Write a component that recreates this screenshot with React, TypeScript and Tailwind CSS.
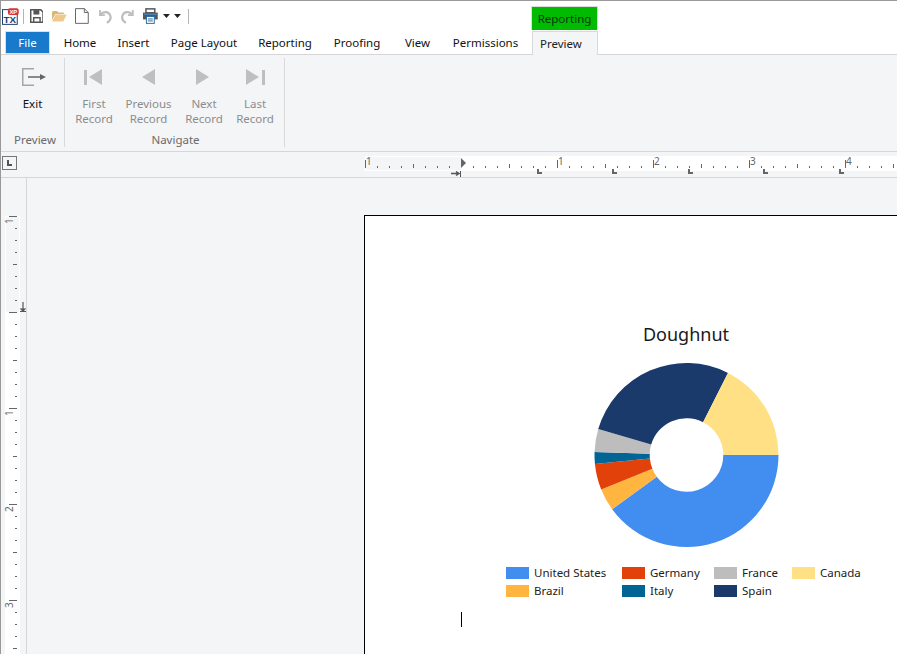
import React from "react";

const font = { fontFamily: '"Noto Sans", "Open Sans", sans-serif' };

const slices: { c: string; to: number }[] = [
  { c: "#418df0", to: 143.9 },
  { c: "#ffb540", to: 158 },
  { c: "#e2410a", to: 174.4 },
  { c: "#006595", to: 181.9 },
  { c: "#bdbdbd", to: 196.4 },
  { c: "#1a3a6c", to: 296.8 },
  { c: "#ffe084", to: 360 },
];

function arc(a0: number, a1: number) {
  const R = 92, r = 36.8, cx = 93.5, cy = 93;
  const p = (rad: number, a: number) => {
    const t = (a * Math.PI) / 180;
    return `${(cx + rad * Math.cos(t)).toFixed(2)} ${(cy + rad * Math.sin(t)).toFixed(2)}`;
  };
  const large = a1 - a0 > 180 ? 1 : 0;
  return `M${p(R, a0)}A${R} ${R} 0 ${large} 1 ${p(R, a1)}L${p(r, a1)}A${r} ${r} 0 ${large} 0 ${p(r, a0)}Z`;
}

function Donut() {
  let prev = 0;
  return (
    <svg width="186" height="186" viewBox="0 0 186 186" className="block">
      {slices.map((s) => {
        const d = arc(prev, s.to);
        prev = s.to;
        return <path key={s.c} d={d} fill={s.c} />;
      })}
    </svg>
  );
}

function TxLogo() {
  return (
    <svg width="17" height="17" viewBox="0 0 17 17" className="block">
      <rect x="0.5" y="1.5" width="15" height="15" fill="#fff" stroke="#1c3f6e" />
      <rect x="6" y="0" width="11" height="7" rx="2" fill="#d8323c" />
      <text x="7.5" y="6" fontSize="6" fontWeight="700" fill="#fff" fontFamily="Liberation Sans">XP</text>
      <text x="1.5" y="15" fontSize="10" fontWeight="700" fill="#1c3f6e" fontFamily="Liberation Sans">TX</text>
    </svg>
  );
}

const Sep = () => <div className="w-px h-[15px] bg-[#b5b5b5]" />;

function QuickIcons() {
  return (
    <div className="flex items-center w-[188px] h-full pl-[1px]">
      <TxLogo />
      <div className="ml-[4px]"><Sep /></div>
      <svg width="14" height="14" viewBox="0 0 14 14" className="ml-[6px]">
        <path d="M.75.75H11L13.25 3V13.25H.75Z" fill="none" stroke="#555" strokeWidth="1.5" />
        <rect x="3.5" y="1" width="6" height="4.5" fill="#555" />
        <rect x="3" y="8" width="8" height="5" fill="#555" />
        <rect x="4.5" y="9.5" width="5" height="3" fill="#fff" />
      </svg>
      <svg width="15" height="12" viewBox="0 0 15 12" className="ml-[9px]">
        <path d="M0 2.5Q0 1 1.5 1H5L6.5 2.5H12V4H3.5L0 10Z" fill="#d9b877" />
        <path d="M3.8 4.5H15L11.5 11.5H0Z" fill="#efc98b" />
      </svg>
      <svg width="14" height="16" viewBox="0 0 14 16" className="ml-[8px]">
        <path d="M.5.5H9.5L13.5 4.5V15.5H.5Z" fill="#fff" stroke="#666" />
        <path d="M9.5.5V4.5H13.5" fill="none" stroke="#666" />
      </svg>
      <svg width="14" height="15" viewBox="0 0 14 15" className="ml-[9px]">
        <path d="M2 1V6H7" fill="none" stroke="#bdbdbd" strokeWidth="1.8" />
        <path d="M2.5 5.500C5 2 11 2 12.500 6.500C13.500 9.500 11.500 12.500 9 14" fill="none" stroke="#bdbdbd" strokeWidth="2.200" />
      </svg>
      <svg width="14" height="15" viewBox="0 0 14 15" className="ml-[9px]">
        <path d="M12 1V6H7" fill="none" stroke="#bdbdbd" strokeWidth="1.8" />
        <path d="M11.500 5.500C9 2 3 2 1.500 6.500C.5 9.500 2.500 12.500 5 14" fill="none" stroke="#bdbdbd" strokeWidth="2.200" />
      </svg>
      <svg width="17" height="16" viewBox="0 0 17 16" className="ml-[7px]">
        <rect x="4" y="0.750" width="9" height="4" fill="#fff" stroke="#555" strokeWidth="1.500" />
        <path d="M1 4.500H16V11.500H1Z" fill="#555" />
        <rect x="2" y="5.500" width="13" height="1.500" fill="#4f7fa8" />
        <rect x="4.500" y="8.500" width="8" height="7" fill="#fff" stroke="#2f6b9e" />
        <path d="M6 11H11M6 13H11" stroke="#2f6b9e" />
      </svg>
      <svg width="7" height="4" viewBox="0 0 7 4" className="ml-[5px]"><path d="M0 0H7L3.500 4Z" fill="#222" /></svg>
      <svg width="7" height="4" viewBox="0 0 7 4" className="ml-[4px]"><path d="M0 0H7L3.500 4Z" fill="#222" /></svg>
      <div className="ml-[7px]"><Sep /></div>
    </div>
  );
}

const tabs = [
  { t: "Home", w: "w-[60px]" },
  { t: "Insert", w: "w-[47px]" },
  { t: "Page Layout", w: "w-[94px]" },
  { t: "Reporting", w: "w-[68px]" },
  { t: "Proofing", w: "w-[76px]" },
  { t: "View", w: "w-[45px]" },
  { t: "Permissions", w: "w-[91px]" },
];

const NavIcon = ({ d }: { d: string }) => (
  <svg width="20" height="16" viewBox="0 0 20 16" className="block">
    <path d={d} fill="#bfbfbf" />
  </svg>
);

function NavBtn({ w, a, b, d }: { w: string; a: string; b: string; d: string }) {
  return (
    <div className={`${w} flex flex-col items-center text-[#8c8c8c] leading-[15px]`}>
      <div className="h-[17px] mb-[11px] flex items-center"><NavIcon d={d} /></div>
      <span>{a}</span>
      <span>{b}</span>
    </div>
  );
}

function HRuler() {
  const small: number[] = [];
  for (let x = 377; x < 897; x += 12) {
    if ((x - 365) % 96 !== 0 && (x - 461) % 96 !== 0) small.push(x);
  }
  const mids = [413, 509, 605, 701, 797, 893];
  const longs = [365, 557, 653, 749, 845];
  const labels: [number, string][] = [[367, "1"], [559, "1"], [655, "2"], [751, "3"], [847, "4"]];
  const stops = [537, 612, 688, 763, 839];
  return (
    <svg width="880" height="25" viewBox="17 152 880 25" className="block">
      <rect x="365" y="156" width="532" height="15" fill="#fff" />
      <rect x="366" y="157" width="95" height="13" fill="#f4f5f7" />
      {small.map((x) => <rect key={x} x={x} y="166" width="1" height="2" fill="#666" />)}
      {mids.map((x) => <rect key={x} x={x} y="164" width="1" height="4" fill="#666" />)}
      {longs.map((x) => <rect key={x} x={x} y="160" width="1" height="8" fill="#666" />)}
      {labels.map(([x, s]) => (
        <text key={x} x={x - 1} y="165" fontSize="10" fill="#666" fontFamily="Noto Sans">{s}</text>
      ))}
      <path d="M461 158L466 163L461 168Z" fill="#666" />
      {stops.map((x) => <path key={x} d={`M${x} 169H${x + 2}V172H${x + 5}V174H${x}Z`} fill="#666" />)}
      <path d="M451 173.500H458M456 171.500L459 173.500L456 175.500" stroke="#555" strokeWidth="1.500" fill="none" />
      <rect x="460" y="171" width="1" height="6" fill="#555" />
    </svg>
  );
}

function VRuler() {
  const small: number[] = [];
  for (let y = 228; y < 654; y += 12) {
    if ((y - 216) % 48 !== 0) small.push(y);
  }
  const mids = [264, 360, 456, 552, 648];
  const longs = [216, 312, 408, 504, 600];
  const labels: [number, string][] = [[219, "1"], [411, "1"], [507, "2"], [603, "3"]];
  return (
    <svg width="25" height="476" viewBox="1 178 25 476" className="block">
      <rect x="5" y="216" width="15" height="438" fill="#fff" />
      <rect x="6" y="217" width="13" height="95" fill="#f4f5f7" />
      {small.map((y) => <rect key={y} x="15" y={y} width="2" height="1" fill="#666" />)}
      {mids.map((y) => <rect key={y} x="13" y={y} width="4" height="1" fill="#666" />)}
      {longs.map((y) => <rect key={y} x="9" y={y} width="8" height="1" fill="#666" />)}
      {labels.map(([y, s]) => (
        <text key={y} x={-y - 5} y="13" fontSize="10" fill="#666" fontFamily="Noto Sans" transform="rotate(-90)">{s}</text>
      ))}
      <path d="M23 302V309M21 309H25L23 311Z" stroke="#555" fill="#555" strokeWidth="1.200" />
      <rect x="20" y="311" width="6" height="1" fill="#555" />
    </svg>
  );
}

const legend = [
  { c: "bg-[#418df0]", t: "United States" },
  { c: "bg-[#e2410a]", t: "Germany" },
  { c: "bg-[#bdbdbd]", t: "France" },
  { c: "bg-[#ffe084]", t: "Canada" },
  { c: "bg-[#ffb540]", t: "Brazil" },
  { c: "bg-[#006595]", t: "Italy" },
  { c: "bg-[#1a3a6c]", t: "Spain" },
];

export default function App() {
  return (
    <div style={font} className="w-[897px] h-[654px] overflow-hidden flex flex-col bg-[#f4f5f7] border-t border-l border-[#999] text-[11.5px] text-[#222]">
      {/* quick access */}
      <div className="h-[30px] bg-white flex items-center shrink-0">
        <QuickIcons />
        <div className="ml-[342px] self-end mb-[1px] h-[24px] w-[67px] bg-[#00bb00] border border-[#dcdcdc] border-b-0 flex items-center justify-center text-[#0a3310]">
          Reporting
        </div>
      </div>
      {/* tabs */}
      <div className="h-[24px] bg-white flex items-stretch border-b border-[#d6d6d6] shrink-0 pl-[4px]">
        <div className="w-[45px] h-[23px] bg-[#1979ca] border border-[#cfe3f4] text-white flex items-center justify-center">File</div>
        <div className="flex">
          {tabs.map((x) => (
            <div key={x.t} className={`${x.w} flex items-center justify-center text-[#111]`}>{x.t}</div>
          ))}
        </div>
        <div className="w-[66px] h-[24px] bg-[#f4f5f7] border-x border-t border-[#d9d9d9] flex items-center pl-[7px] text-[#222] ml-[1px]">Preview</div>
      </div>
      {/* ribbon */}
      <div className="h-[97px] flex border-b border-[#d6d6d6] shrink-0 pt-[3px] pb-[4px]">
        <div className="w-[64px] border-r border-[#d9d9d9] flex flex-col items-center">
          <div className="h-[17px] mt-[10px] mb-[11px] flex items-center">
            <svg width="24" height="18" viewBox="0 0 24 18" className="block ml-[3px]">
              <path d="M12 .75H.75V17.25H12" fill="none" stroke="#a6a6a6" strokeWidth="1.500" />
              <path d="M6 9H20" stroke="#666" strokeWidth="1.500" />
              <path d="M18 6L24 9L18 12Z" fill="#666" />
            </svg>
          </div>
          <span className="leading-[15px] text-[#111]">Exit</span>
          <span className="mt-auto leading-[15px] text-[#6a6a6a] pl-[5px]">Preview</span>
        </div>
        <div className="w-[220px] border-r border-[#d9d9d9] flex flex-col">
          <div className="flex pt-[10px]">
            <NavBtn w="w-[58px]" a="First" b="Record" d="M0 1H3V16H0ZM18 0V16L5 8Z" />
            <NavBtn w="w-[51px]" a="Previous" b="Record" d="M16 0V16L3 8Z" />
            <NavBtn w="w-[60px]" a="Next" b="Record" d="M2 0V16L15 8Z" />
            <NavBtn w="w-[42px]" a="Last" b="Record" d="M1 0V16L14 8ZM17 1H20V16H17Z" />
          </div>
          <span className="mt-auto leading-[15px] text-[#6a6a6a] text-center pl-[2px]">Navigate</span>
        </div>
      </div>
      {/* ruler row */}
      <div className="h-[26px] flex shrink-0 border-b border-[#d6d6d6]">
        <div className="w-[16px] pl-[1px] pt-[4px]">
          <div className="w-[15px] h-[14px] border border-[#777] flex items-center justify-center">
            <svg width="7" height="7" viewBox="0 0 7 7"><path d="M1 0H3V4H6V6H1Z" fill="#555" /></svg>
          </div>
        </div>
        <HRuler />
      </div>
      {/* body */}
      <div className="flex-1 flex min-h-0">
        <div className="w-[25px] shrink-0"><VRuler /></div>
        <div className="flex-1 border-l border-[#d6d6d6] pt-[37px] pl-[337px] overflow-hidden">
          <div className="w-[700px] h-[600px] bg-white border border-black pl-[96px]">
            <div className="w-[450px] flex flex-col items-center">
              <div className="mt-[105px] h-[27px] leading-[27px] text-[18px] text-[#1a1a1a]">Doughnut</div>
              <div className="mt-[14px]"><Donut /></div>
              <div className="mt-[19px] grid grid-cols-[116px_92px_78px_74px] gap-y-[6px] w-[360px] text-[11.5px] leading-[12px] text-[#222]">
                {legend.map((l) => (
                  <div key={l.t} className="flex items-center h-[12px]">
                    <span className={`w-[23px] h-[12px] ${l.c}`} />
                    <span className="ml-[5px] whitespace-nowrap">{l.t}</span>
                  </div>
                ))}
              </div>
            </div>
            <div className="w-px h-[15px] bg-black mt-[15px]" />
          </div>
        </div>
      </div>
    </div>
  );
}
